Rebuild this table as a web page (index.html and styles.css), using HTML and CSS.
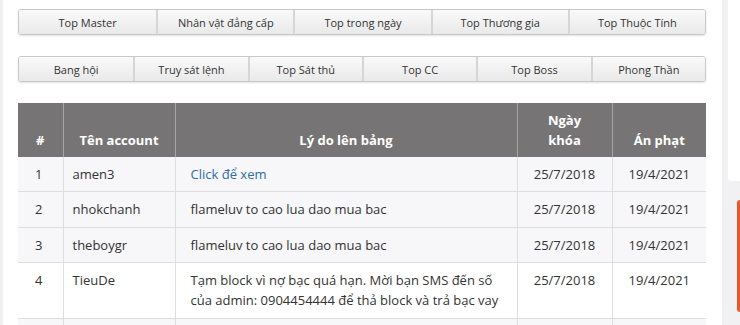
FILE: index.html
```html
<!DOCTYPE html>
<html lang="vi">
<head>
<meta charset="utf-8">
<link rel="stylesheet" href="styles.css">
</head>
<body>
<div class="page">
  <div class="strip"></div>
  <main class="main">
    <nav class="tabs tabs-5">
      <a class="tab">Top Master</a>
      <a class="tab">Nhân vật đẳng cấp</a>
      <a class="tab">Top trong ngày</a>
      <a class="tab">Top Thương gia</a>
      <a class="tab">Top Thuộc Tính</a>
    </nav>
    <nav class="tabs tabs-6">
      <a class="tab">Bang hội</a>
      <a class="tab">Truy sát lệnh</a>
      <a class="tab">Top Sát thủ</a>
      <a class="tab">Top CC</a>
      <a class="tab">Top Boss</a>
      <a class="tab">Phong Thần</a>
    </nav>
    <table class="ban">
      <colgroup>
        <col class="c-num"><col class="c-acc"><col class="c-reason"><col class="c-date"><col class="c-pen">
      </colgroup>
      <thead>
        <tr><th>#</th><th>Tên account</th><th>Lý do lên bảng</th><th>Ngày<br>khóa</th><th>Án phạt</th></tr>
      </thead>
      <tbody>
        <tr class="alt"><td class="num">1</td><td class="acc">amen3</td><td class="reason"><a class="link">Click để xem</a></td><td class="date">25/7/2018</td><td class="date">19/4/2021</td></tr>
        <tr class="alt"><td class="num">2</td><td class="acc">nhokchanh</td><td class="reason">flameluv to cao lua dao mua bac</td><td class="date">25/7/2018</td><td class="date">19/4/2021</td></tr>
        <tr class="alt"><td class="num">3</td><td class="acc">theboygr</td><td class="reason">flameluv to cao lua dao mua bac</td><td class="date">25/7/2018</td><td class="date">19/4/2021</td></tr>
        <tr><td class="num">4</td><td class="acc">TieuDe</td><td class="reason">Tạm block vì nợ bạc quá hạn. Mời bạn SMS đến số của admin: 0904454444 để thả block và trả bạc vay</td><td class="date">25/7/2018</td><td class="date">19/4/2021</td></tr>
        <tr class="alt"><td class="num">&nbsp;</td><td class="acc">&nbsp;</td><td class="reason">&nbsp;</td><td class="date">&nbsp;</td><td class="date">&nbsp;</td></tr>
      </tbody>
    </table>
  </main>
  <aside class="side">
    <div class="card"></div>
    <div class="promo"></div>
  </aside>
</div>
</body>
</html>
```

FILE: styles.css
```css
html, body {
  margin: 0;
  padding: 0;
  height: 100%;
  overflow: hidden;
}
body {
  font-family: "Open Sans", "Noto Sans", sans-serif;
  color: #333;
  background: #fff;
}
.page {
  display: flex;
  width: 740px;
  height: 325px;
}
.strip {
  width: 3px;
  flex: none;
  background: #f0f0f2;
}
.main {
  width: 719px;
  flex: none;
  background: #fff;
  padding: 9px 16px 0 15px;
  box-sizing: border-box;
}
.side {
  flex: 1;
  background: #f1f1f3;
  padding-left: 6px;
  display: flex;
  flex-direction: column;
}
.card {
  height: 181px;
  background: #fff;
  border-radius: 0 0 0 3px;
}
.promo {
  margin-top: 19px;
  margin-left: 9px;
  height: 112px;
  background: #e8572b;
  border-radius: 3px 0 0 3px;
}
.tabs {
  display: grid;
  height: 26px;
  border: 1px solid #c8c8c8;
  border-radius: 3px;
  box-shadow: 0 1px 2px rgba(0,0,0,0.12);
  overflow: hidden;
  box-sizing: border-box;
}
.tabs-5 { grid-template-columns: repeat(5, 1fr); }
.tabs-6 { grid-template-columns: repeat(6, 1fr); margin-top: 21px; }
.tab {
  display: flex;
  align-items: center;
  justify-content: center;
  font-size: 11px;
  color: #333;
  background: linear-gradient(#fafafa, #e9e9e9);
  border-left: 2px solid #d6d6d6;
}
.tab:first-child { border-left: none; }
.ban {
  width: 688px;
  margin-top: 21px;
  border-collapse: collapse;
  table-layout: fixed;
  font-size: 13px;
  line-height: 20px;
}
.c-num { width: 45px; }
.c-acc { width: 112px; }
.c-reason { width: 342px; }
.c-date { width: 95px; }
.c-pen { width: 94px; }
.ban th {
  background: #767474;
  color: #fff;
  font-weight: 700;
  text-align: center;
  vertical-align: bottom;
  padding: 7px 8px;
  border-left: 1px solid #a5a4a5;
}
.ban th:first-child { border-left: none; }
.ban td {
  padding: 7px 8px 7px;
  vertical-align: top;
  border-left: 1px solid #dedde0;
  border-bottom: 1px solid #dedde0;
}
.ban tbody tr:nth-child(2) td,
.ban tbody tr:nth-child(4) td { padding-bottom: 8px; }
.ban td:first-child { border-left: none; }
.ban tr.alt td { background: #f7f6f8; }
.ban td.num { padding-left: 17px; }
.ban td.acc { padding-left: 9px; }
.ban td.reason { padding-left: 15px; }
.ban td.date { text-align: center; }
.link { color: #2d6ea7; }
```
